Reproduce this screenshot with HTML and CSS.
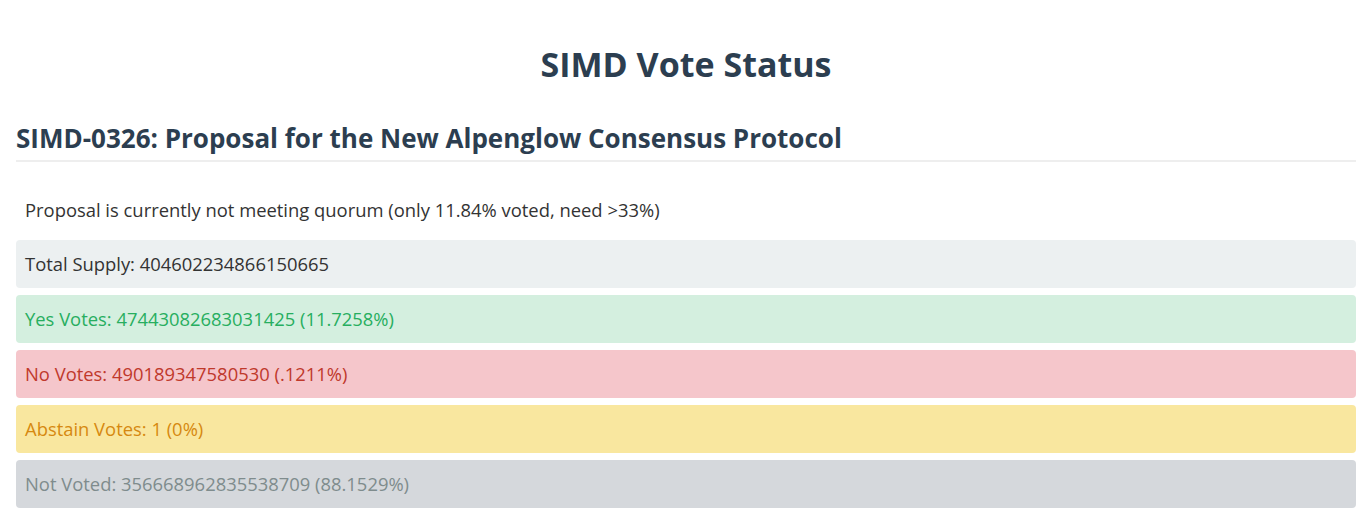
FILE: index.html
```html
<!DOCTYPE html>
<html lang="en">
<head>
    <meta charset="UTF-8">
    <meta name="viewport" content="width=device-width, initial-scale=1.0">
    <title>SIMD Vote Status</title>
    <link rel="stylesheet" href="styles.css">
</head>
<body>
    <div class="container">
        <h1>SIMD Vote Status</h1>
        <div class="proposal">
            <h2>SIMD-0326: Proposal for the New Alpenglow Consensus Protocol</h2>
            <p class="status">Proposal is currently not meeting quorum (only 11.84% voted, need &gt;33%)</p>
            <div class="row total">Total Supply: 404602234866150665</div>
            <div class="row yes">Yes Votes: 47443082683031425 (11.7258%)</div>
            <div class="row no">No Votes: 490189347580530 (.1211%)</div>
            <div class="row abstain">Abstain Votes: 1 (0%)</div>
            <div class="row notvoted">Not Voted: 356668962835538709 (88.1529%)</div>
        </div>
    </div>
</body>
</html>
```

FILE: styles.css
```css
/*
    基本样式
*/
body {
    margin: 0;
    font-family: "Open Sans", "Noto Sans", sans-serif;
    color: #333;
    background-color: #fff;
}

.container {
    padding: 0 10px 0 16px;
}

h1 {
    margin: 0;
    padding-top: 40px;
    text-align: center;
    font-size: 34px;
    line-height: 48px;
    color: #2c3e50;
}

/*
    提案
*/
.proposal h2 {
    margin: 32px 0 0;
    padding-bottom: 4px;
    border-bottom: 2px solid #eee;
    font-size: 26px;
    line-height: 36px;
    color: #2c3e50;
}

.proposal .status {
    margin: 35px 0 17px;
    padding: 0 9px;
    font-size: 18.4px;
    line-height: 26px;
}

.row {
    margin-bottom: 7px;
    padding: 12px 9px;
    border-radius: 4px;
    font-size: 18.4px;
    line-height: 24px;
}

.total {
    background-color: #ecf0f1;
    color: #333;
}

.yes {
    background-color: #d4efdf;
    color: #27ae60;
}

.no {
    background-color: #f5c6cb;
    color: #c0392b;
}

.abstain {
    background-color: #f9e79f;
    color: #d68910;
}

.notvoted {
    background-color: #d5d8dc;
    color: #7f8c8d;
}
```
